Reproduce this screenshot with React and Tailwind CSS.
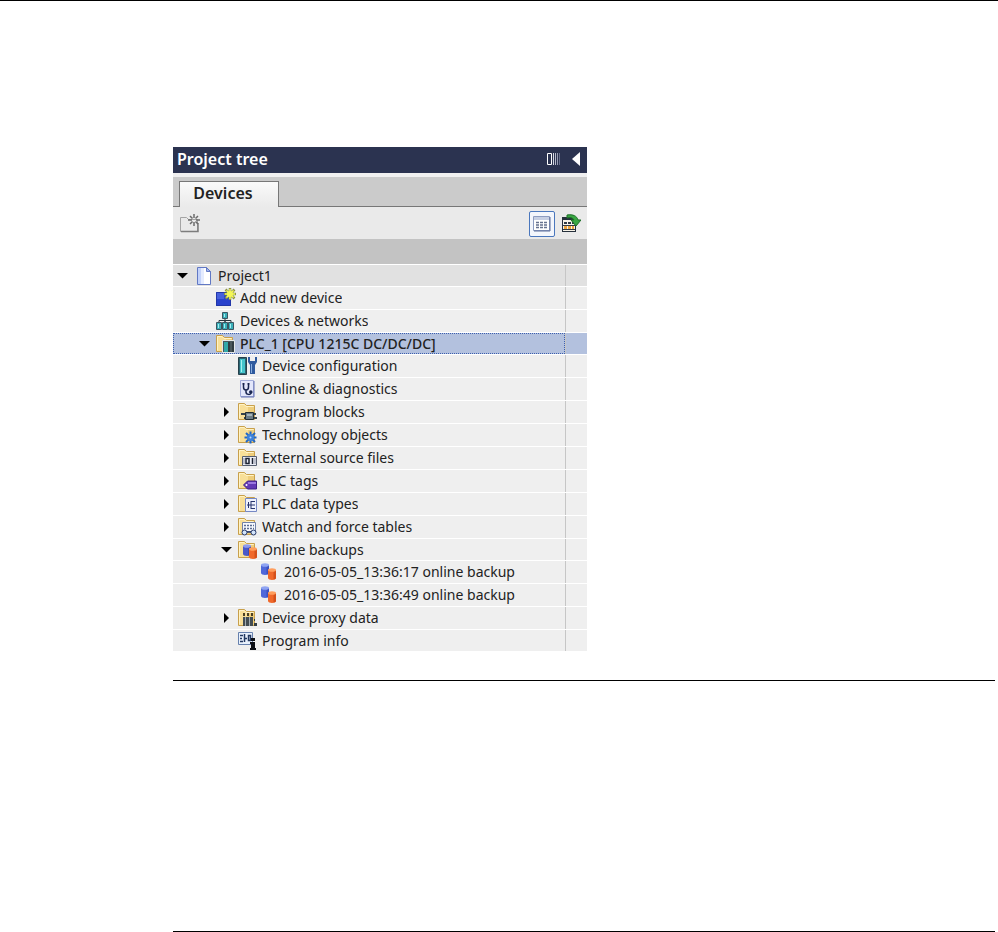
import { useState } from 'react';
import clsx from 'clsx';

// Each entry: depth in the tree, icon, label, and whether the node is
// expanded (true), collapsed (false) or a leaf (undefined).
const NODES = [
  { id: 'project', depth: 0, icon: 'page', label: 'Project1', open: true },
  { id: 'add', depth: 1, icon: 'add', label: 'Add new device' },
  { id: 'networks', depth: 1, icon: 'network', label: 'Devices & networks' },
  { id: 'plc', depth: 1, icon: 'plc', label: 'PLC_1 [CPU 1215C DC/DC/DC]', open: true },
  { id: 'config', depth: 2, icon: 'config', label: 'Device configuration' },
  { id: 'diagnostics', depth: 2, icon: 'diagnostics', label: 'Online & diagnostics' },
  { id: 'blocks', depth: 2, icon: 'blocks', label: 'Program blocks', open: false },
  { id: 'technology', depth: 2, icon: 'technology', label: 'Technology objects', open: false },
  { id: 'sources', depth: 2, icon: 'sources', label: 'External source files', open: false },
  { id: 'tags', depth: 2, icon: 'tags', label: 'PLC tags', open: false },
  { id: 'types', depth: 2, icon: 'types', label: 'PLC data types', open: false },
  { id: 'watch', depth: 2, icon: 'watch', label: 'Watch and force tables', open: false },
  { id: 'backups', depth: 2, icon: 'backups', label: 'Online backups', open: true },
  { id: 'backup1', depth: 3, icon: 'backup', label: '2016-05-05_13:36:17 online backup' },
  { id: 'backup2', depth: 3, icon: 'backup', label: '2016-05-05_13:36:49 online backup' },
  { id: 'proxy', depth: 2, icon: 'proxy', label: 'Device proxy data', open: false },
  { id: 'info', depth: 2, icon: 'info', label: 'Program info' },
];

const INDENT = ['pl-[3px]', 'pl-[25px]', 'pl-[47px]', 'pl-[69px]'];

function Folder() {
  return (
    <g>
      <path d="M.5 17.500V1.500h6l2 2h8v14z" fill="#f8df98" stroke="#c8a04c" />
      <path d="M1.500 16.500V2.500h4.500l2 2h7.500" fill="none" stroke="#fff3c6" />
      <path d="M10 5h6v12h-6z" fill="#e2b75c" opacity=".45" />
    </g>
  );
}

function Star({ x, y, fill, stroke }) {
  return (
    <g transform={`translate(${x} ${y})`}>
      <path
        d="M0-6V6M-6 0H6M-4.500-4.500L4.500 4.500M-4.500 4.500L4.500-4.500"
        stroke={stroke}
        strokeWidth="2.500"
      />
      <circle r="3" fill={fill} />
      <path d="M0-5V5M-5 0H5M-3.500-3.500L3.500 3.500M-3.500 3.500L3.500-3.500" stroke={fill} strokeWidth="1.500" />
    </g>
  );
}

function Cylinder({ x, y, body, light, dark }) {
  return (
    <g transform={`translate(${x} ${y})`}>
      <path d="M0 2v8c0 2.500 8 2.500 8 0V2z" fill={body} />
      <path d="M5.500 3v8.600c1.500-.3 2.500-.8 2.500-1.600V2z" fill={dark} />
      <ellipse cx="4" cy="2" rx="4" ry="1.800" fill={light} />
    </g>
  );
}

const DRAWINGS = {
  page: (
    <g>
      <path d="M3.500 1.500h9l4 4v13h-13z" fill="#fff" stroke="#6178c4" />
      <path d="M4 2h3v16H4z" fill="#c3d2fa" />
      <path d="M7 2h3v16H7z" fill="#e4ebfe" />
      <path d="M12.500 1.500v4h4z" fill="#9db2ee" stroke="#6178c4" />
    </g>
  ),
  add: (
    <g>
      <path d="M0 4h15v14H0z" fill="#2a43cc" />
      <path d="M0 4h8v7H0z" fill="#5a74e6" opacity=".6" />
      <path d="M.5 4.500h14v13H.5z" fill="none" stroke="#2337a8" />
      <Star x={14} y={6} fill="#f4f75a" stroke="#8b9444" />
    </g>
  ),
  network: (
    <g>
      <path d="M9 7v4M3 12v-2.500h12V12M9 9v4" fill="none" stroke="#26343c" />
      <path
        d="M6.500 1.500h5v6h-5zM.5 11.500h5v7h-5zM6.500 11.500h5v7h-5zM12.500 11.500h5v7h-5z"
        fill="#39aeb8"
        stroke="#3a5560"
      />
      <path d="M8 3h1v3H8zM2 13h1v4H2zM8 13h1v4H8zM14 13h1v4h-1z" fill="#a7edf0" />
    </g>
  ),
  plc: (
    <g>
      <Folder />
      <path d="M6.500 6.500h12v12h-12z" fill="#4a575c" stroke="#e5e8ea" />
      <path d="M8 8h4v10H8z" fill="#32a8a8" />
      <path d="M13 8v10M17 8v10" stroke="#18252b" />
    </g>
  ),
  config: (
    <g>
      <path d="M.5 1.500h8v17h-8z" fill="#2b6673" stroke="#26414c" />
      <path d="M2 3h5v14H2z" fill="#44c4cb" />
      <path d="M3 4h1v12H3z" fill="#a5f0f0" />
      <path d="M10 1v5l2 3v9h5V9l2-3V1h-2v4h-5V1z" fill="#2f5a9e" />
      <path d="M13 8h1v9h-1z" fill="#89afe0" />
    </g>
  ),
  diagnostics: (
    <g>
      <path d="M2.500 1.500h13v16h-13z" fill="#e3e7fb" stroke="#a1abd9" />
      <path d="M16 2v16H3" fill="none" stroke="#6675b5" />
      <path d="M5.500 5v3c0 4 5 4 5 0V5M8 11v2c0 3 5 3 5 1" fill="none" stroke="#18244f" strokeWidth="1.500" />
      <path d="M4.500 4h2v1.500h-2zM9.500 4h2v1.500h-2z" fill="#18244f" />
      <circle cx="12.800" cy="13" r="1.800" fill="#18244f" />
    </g>
  ),
  blocks: (
    <g>
      <Folder />
      <path d="M3 12h15M6 16h13" stroke="#35434c" strokeWidth="2" />
      <path d="M7.500 10.500h8v7h-8z" fill="#6d7d86" stroke="#222e35" />
      <path d="M9 12h5v2H9z" fill="#a4b4bb" />
    </g>
  ),
  technology: (
    <g>
      <Folder />
      <path d="M12.500 6.500v12M6.500 12.500h12M8 8l9 9M8 17l9-9" stroke="#2368c5" strokeWidth="2" />
      <circle cx="12.500" cy="12.500" r="3.500" fill="#3d82dc" />
      <circle cx="12.500" cy="12.500" r="1" fill="#b9dcff" />
    </g>
  ),
  sources: (
    <g>
      <Folder />
      <path d="M4.500 8.500h14v9h-14z" fill="#eceef6" stroke="#555d6e" />
      <path d="M8 10.500h3v5H8zM14.500 10v6" fill="none" stroke="#1a2132" strokeWidth="1.500" />
      <path d="M6 10v6M17 10v6" stroke="#8d93a4" />
    </g>
  ),
  tags: (
    <g>
      <Folder />
      <path d="M5.500 14l4-4h9v8h-9z" fill="#6238b5" stroke="#3d1f86" />
      <path d="M10 11h8v2h-8z" fill="#9a77df" />
      <circle cx="8.500" cy="14" r="1" fill="#fff" />
    </g>
  ),
  types: (
    <g>
      <Folder />
      <path d="M7.500 4.500h11v13h-11z" fill="#eef2fd" stroke="#7588c4" />
      <path d="M10.500 8v6M9 11h4M13 7v8M13 7.500h4M13 11h4M13 14.500h4" fill="none" stroke="#26346c" />
    </g>
  ),
  watch: (
    <g>
      <Folder />
      <path d="M4.500 5.500h13v9h-13z" fill="#f6f8fd" stroke="#7081a8" />
      <path d="M6 8.500h10M6 11.500h10" stroke="#5a6b91" strokeWidth="1.500" strokeDasharray="2 1" />
      <circle cx="6.500" cy="15.500" r="2.500" fill="#d2e4fa" stroke="#283867" />
      <circle cx="15.500" cy="15.500" r="2.500" fill="#d2e4fa" stroke="#283867" />
      <path d="M9 15h4" stroke="#283867" strokeWidth="1.500" />
    </g>
  ),
  backups: (
    <g>
      <Folder />
      <Cylinder x={5} y={4} body="#4a58c8" light="#8d9af0" dark="#2f3b9b" />
      <Cylinder x={11} y={7} body="#f0682a" light="#ff9d5c" dark="#d4501a" />
    </g>
  ),
  backup: (
    <g>
      <Cylinder x={1} y={1} body="#5068da" light="#8fa4f2" dark="#3c50c0" />
      <Cylinder x={8} y={6} body="#f0682a" light="#ff9d5c" dark="#d4501a" />
    </g>
  ),
  proxy: (
    <g>
      <Folder />
      <path d="M5 5h2v3H5zM9 5h2v3H9zM13 5h2v3h-2z" fill="#4b4025" />
      <path d="M5 9h10v9H5z" fill="#434d53" />
      <path d="M7.500 9v9M11.500 9v9" stroke="#a3adb2" />
      <path d="M16 11h1v2h-1zM16 15h3v3h-3z" fill="#343e44" />
    </g>
  ),
  info: (
    <g>
      <path d="M.5 1.500h14v12H.5z" fill="#e8f1fc" stroke="#6680ad" />
      <path d="M2 4.500h3M2 7.500h2M2 10.500h3M6.500 3v8M7 7.500h2M10.500 4.500h2v5h-2z" fill="none" stroke="#21375f" strokeWidth="1.500" />
      <path d="M13 7h4v3h-4zM12 11h5v6h1v2h-6v-2h1v-4h-1z" fill="#0b0e14" />
    </g>
  ),
};

function NodeIcon({ name }) {
  return (
    <svg viewBox="0 0 20 20" className="size-5 shrink-0" aria-hidden="true">
      {DRAWINGS[name]}
    </svg>
  );
}

function Toggle({ open, label, onClick }) {
  if (open === undefined) {
    return <span className="w-[14px] shrink-0" />;
  }

  return (
    <button
      type="button"
      aria-label={`${open ? 'Collapse' : 'Expand'} ${label}`}
      onClick={onClick}
      className="h-4 w-[14px] shrink-0"
    >
      <svg viewBox="0 0 14 16" className="h-4 w-[14px]">
        {open ? <path d="M1 5h11l-5.500 5.500z" /> : <path d="M4 3v10l5-5z" />}
      </svg>
    </button>
  );
}

function TreeRow({ node, selected, onSelect, onToggle }) {
  return (
    <li
      role="treeitem"
      aria-level={node.depth + 1}
      aria-expanded={node.open}
      aria-selected={selected}
      onClick={onSelect}
      className={clsx(
        'flex border-t border-white last:h-[22px]',
        node.open ? 'h-[22px]' : 'h-[23px]',
        selected && 'bg-[#b3c1de]',
        !selected && (node.depth === 0 ? 'bg-[#e1e1e1]' : 'bg-[#efefef]'),
      )}
    >
      <div
        className={clsx(
          'flex min-w-0 flex-1 items-center gap-1',
          INDENT[node.depth],
          selected && 'outline-1 -outline-offset-1 outline-dotted outline-[#3c5fae]',
        )}
      >
        <Toggle open={node.open} label={node.label} onClick={onToggle} />
        <NodeIcon name={node.icon} />
        <span
          className={clsx(
            'truncate text-[14px] leading-5',
            selected && 'font-medium',
          )}
        >
          {node.label}
        </span>
      </div>
      <div className="w-[22px] border-l border-[#c6c6c6]" />
    </li>
  );
}

function TitleBar() {
  return (
    <header className="flex h-[26px] items-center bg-[#2b3350] pr-1.5 pb-0.5 pl-1 text-white">
      <h2 className="flex-1 text-[16px] leading-5 font-semibold">Project tree</h2>
      <button type="button" aria-label="Dock panel" className="mr-[11px]">
        <svg viewBox="0 0 14 14" className="size-[14px]">
          <path d="M1.500 1.500h4v11h-4z" fill="none" stroke="#fff" />
          <path d="M7.500 1v12" stroke="#d5d8e2" />
          <path d="M9.500 1v12" stroke="#b5b9c9" />
          <path d="M11.500 1v12" stroke="#969bb1" />
          <path d="M13.500 1v12" stroke="#666e8b" />
        </svg>
      </button>
      <button type="button" aria-label="Collapse panel">
        <svg viewBox="0 0 10 16" className="h-4 w-2.5">
          <path d="M9 1v14L1 8z" fill="#fff" />
        </svg>
      </button>
    </header>
  );
}

function Toolbar() {
  return (
    <div className="flex h-8 items-center bg-[#eaeaea] pt-0.5 pr-1.5 pl-[7px]">
      <button type="button" aria-label="New folder">
        <svg viewBox="0 0 20 20" className="size-5">
          <path d="M.5 17.500v-14h6l2 2h9v12z" fill="#e9e9e9" stroke="#a4a4a4" />
          <path d="M1 17.500h17V9" fill="none" stroke="#7d7d7d" strokeWidth="1.500" />
          <path
            d="M14 0v4M14 8v4M8 6h4M16 6h4M10 2l2.500 2.500M18 2l-2.500 2.500M10 10l2.500-2.500M18 10l-2.500-2.500"
            stroke="#6b6b6b"
            strokeWidth="1.500"
          />
        </svg>
      </button>
      <div className="ml-auto flex items-center gap-1.5">
        <button
          type="button"
          aria-label="Details view"
          className="flex h-[26px] w-[26px] items-center justify-center rounded-xs border border-[#4a77bd] bg-[#f3f6fc]"
        >
          <svg viewBox="0 0 18 16" className="h-4 w-[18px]">
            <path d="M.5 .5h16v14H.5z" fill="#fff" stroke="#8d9cc0" />
            <path d="M1 1h15v3H1z" fill="#c6cfe3" />
            <path d="M17 1v14H1" fill="none" stroke="#5b6d99" />
            <path d="M3 6.500h11M3 9h11M3 11.500h11" stroke="#65728e" strokeWidth="1.500" strokeDasharray="3 1" />
          </svg>
        </button>
        <button type="button" aria-label="Show overview">
          <svg viewBox="0 0 20 20" className="size-5">
            <path d="M1 3h14v15H1z" fill="#26303c" />
            <path d="M2 6h12v11H2z" fill="#f7f3e8" />
            <path d="M3 8h3v2H3zM7 8h3v2H7zM11 8h2v2h-2z" fill="#303a45" />
            <path d="M3 12h3v3H3zM7 12h3v3H7zM11 12h2v3h-2z" fill="#eba33d" />
            <path d="M2 15.500h12M2 11.500h12" stroke="#303a45" />
            <path d="M6 1c6-1 10 1 11 5h3l-5 6-5-6h3C12 4 10 3 6 4z" fill="#3aa743" stroke="#1d7027" />
          </svg>
        </button>
      </div>
    </div>
  );
}

function ProjectTree() {
  const [nodes, setNodes] = useState(NODES);
  const [selected, setSelected] = useState('plc');

  function toggleNode(id) {
    setNodes(nodes.map((n) => (n.id === id ? { ...n, open: !n.open } : n)));
  }

  // A node is hidden as soon as one of its ancestors is collapsed.
  const visible = [];
  let hiddenBelow = Infinity;
  for (const node of nodes) {
    if (node.depth > hiddenBelow) continue;
    hiddenBelow = node.open === false ? node.depth : Infinity;
    visible.push(node);
  }

  return (
    <section className="w-full max-w-[414px] text-[#222]">
      <TitleBar />
      <div
        role="tablist"
        className="flex h-[34px] items-end border-t-4 border-[#f0f0f0] bg-[#cbcbcb]"
      >
        <div className="w-1.5 self-stretch border-b border-[#777]" />
        <button
          type="button"
          role="tab"
          aria-selected="true"
          className="h-[26px] w-[100px] border border-b-0 border-[#777] bg-linear-to-b from-[#fafafa] to-[#eaeaea] pr-3 pb-1 text-[16px] leading-5 font-semibold"
        >
          Devices
        </button>
        <div className="flex-1 self-stretch border-b border-[#777]" />
      </div>
      <Toolbar />
      <div className="h-[25px] bg-[#c3c3c3]" />
      <ul role="tree" aria-label="Project tree">
        {visible.map((node) => (
          <TreeRow
            key={node.id}
            node={node}
            selected={node.id === selected}
            onSelect={() => setSelected(node.id)}
            onToggle={() => toggleNode(node.id)}
          />
        ))}
      </ul>
    </section>
  );
}

export default function App() {
  return (
    <main className="bg-white font-['Noto_Sans','Open_Sans',sans-serif]">
      <hr className="border-black" />
      <div className="pt-[146px] pr-[3px] pl-[173px]">
        <ProjectTree />
        <hr className="mt-[29px] border-black" />
        <hr className="mt-[250px] border-black" />
      </div>
    </main>
  );
}
